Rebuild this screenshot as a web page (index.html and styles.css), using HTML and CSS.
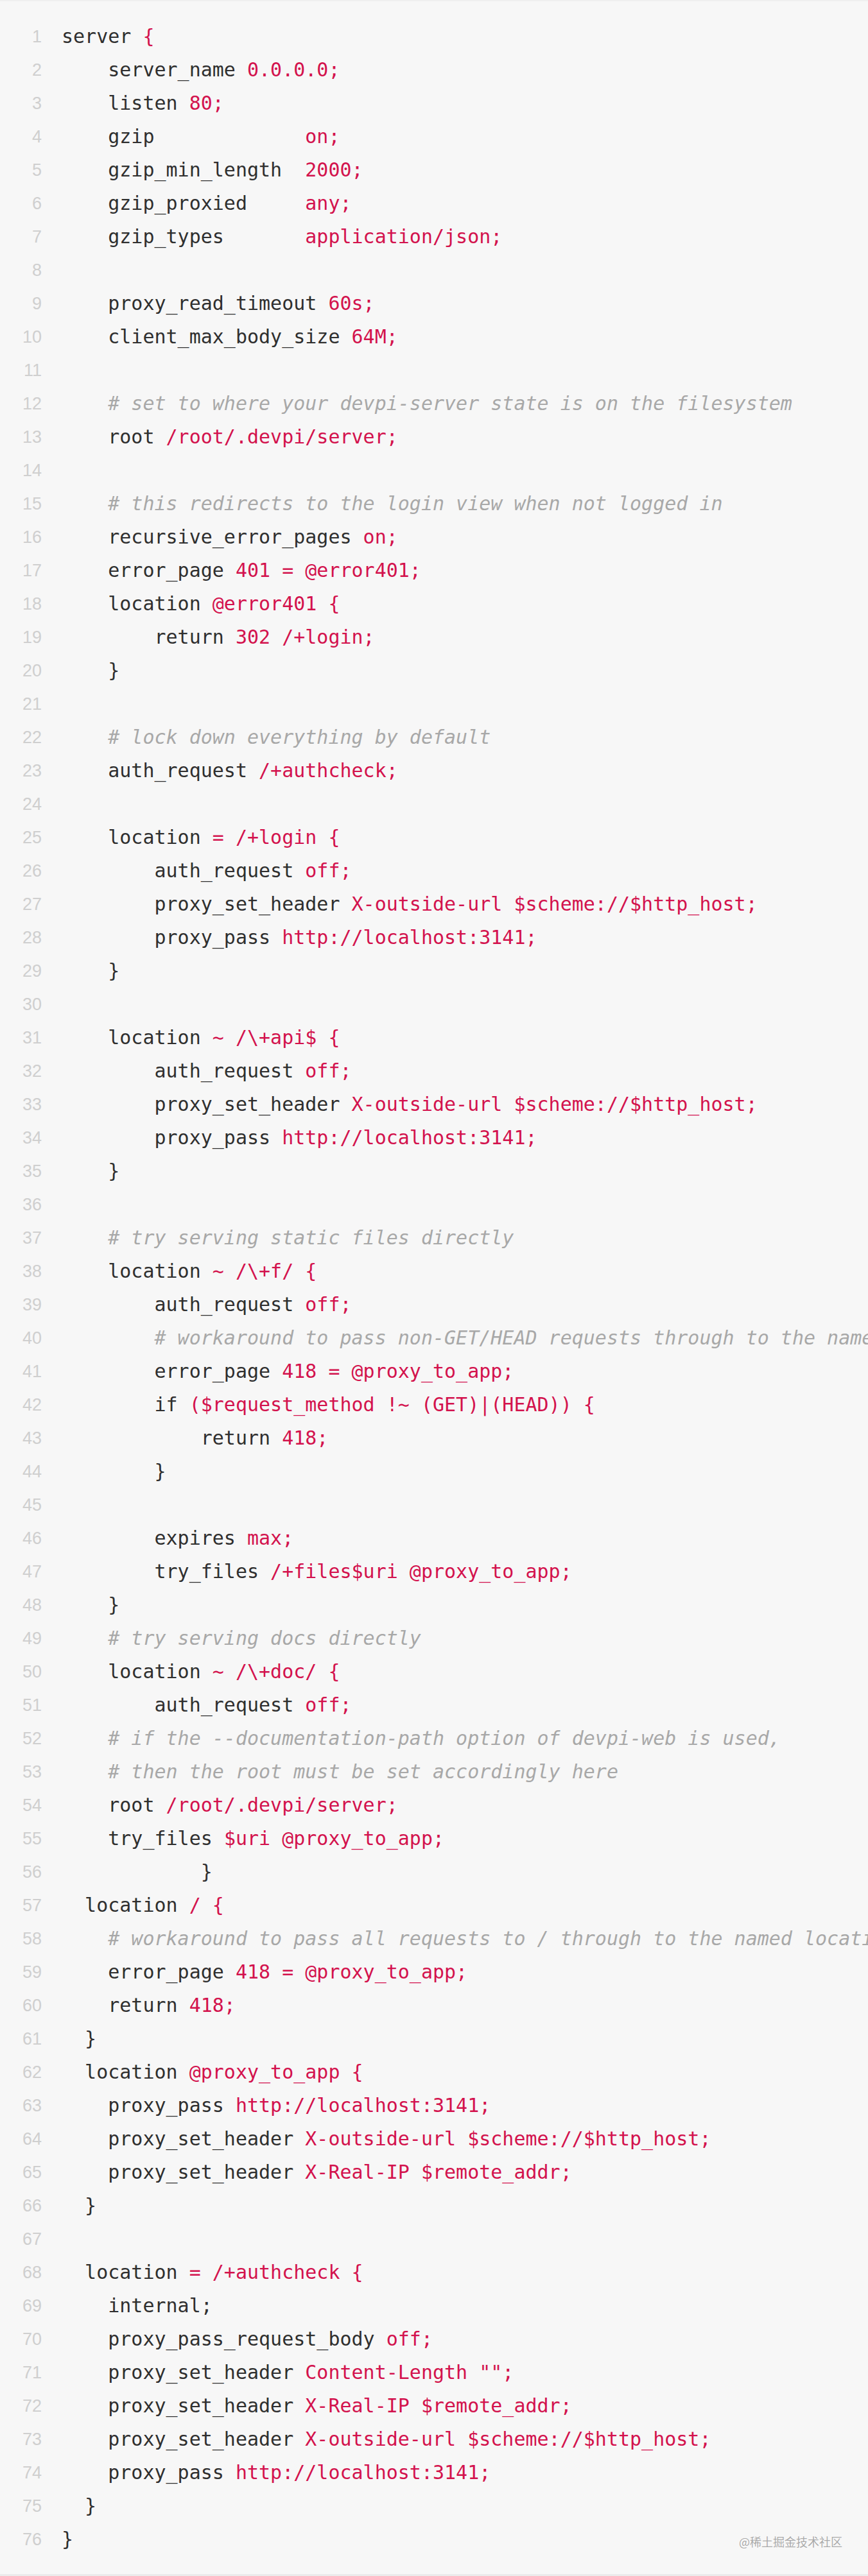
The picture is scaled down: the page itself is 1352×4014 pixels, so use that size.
FILE: index.html
```html
<!DOCTYPE html>
<html lang="en">
<head>
<meta charset="utf-8">
<title>nginx config</title>
<link rel="stylesheet" href="styles.css">
</head>
<body>
<div class="code">
<div class="line"><span class="ln">1</span><span class="src">server <span class="v">{</span></span></div>
<div class="line"><span class="ln">2</span><span class="src">    server_name <span class="v">0.0.0.0;</span></span></div>
<div class="line"><span class="ln">3</span><span class="src">    listen <span class="v">80;</span></span></div>
<div class="line"><span class="ln">4</span><span class="src">    gzip             <span class="v">on;</span></span></div>
<div class="line"><span class="ln">5</span><span class="src">    gzip_min_length  <span class="v">2000;</span></span></div>
<div class="line"><span class="ln">6</span><span class="src">    gzip_proxied     <span class="v">any;</span></span></div>
<div class="line"><span class="ln">7</span><span class="src">    gzip_types       <span class="v">application/json;</span></span></div>
<div class="line"><span class="ln">8</span><span class="src"></span></div>
<div class="line"><span class="ln">9</span><span class="src">    proxy_read_timeout <span class="v">60s;</span></span></div>
<div class="line"><span class="ln">10</span><span class="src">    client_max_body_size <span class="v">64M;</span></span></div>
<div class="line"><span class="ln">11</span><span class="src"></span></div>
<div class="line"><span class="ln">12</span><span class="src">    <span class="c"># set to where your devpi-server state is on the filesystem</span></span></div>
<div class="line"><span class="ln">13</span><span class="src">    root <span class="v">/root/.devpi/server;</span></span></div>
<div class="line"><span class="ln">14</span><span class="src"></span></div>
<div class="line"><span class="ln">15</span><span class="src">    <span class="c"># this redirects to the login view when not logged in</span></span></div>
<div class="line"><span class="ln">16</span><span class="src">    recursive_error_pages <span class="v">on;</span></span></div>
<div class="line"><span class="ln">17</span><span class="src">    error_page <span class="v">401 = @error401;</span></span></div>
<div class="line"><span class="ln">18</span><span class="src">    location <span class="v">@error401 {</span></span></div>
<div class="line"><span class="ln">19</span><span class="src">        return <span class="v">302 /+login;</span></span></div>
<div class="line"><span class="ln">20</span><span class="src">    }</span></div>
<div class="line"><span class="ln">21</span><span class="src"></span></div>
<div class="line"><span class="ln">22</span><span class="src">    <span class="c"># lock down everything by default</span></span></div>
<div class="line"><span class="ln">23</span><span class="src">    auth_request <span class="v">/+authcheck;</span></span></div>
<div class="line"><span class="ln">24</span><span class="src"></span></div>
<div class="line"><span class="ln">25</span><span class="src">    location <span class="v">= /+login {</span></span></div>
<div class="line"><span class="ln">26</span><span class="src">        auth_request <span class="v">off;</span></span></div>
<div class="line"><span class="ln">27</span><span class="src">        proxy_set_header <span class="v">X-outside-url $scheme://$http_host;</span></span></div>
<div class="line"><span class="ln">28</span><span class="src">        proxy_pass <span class="v">http://localhost:3141;</span></span></div>
<div class="line"><span class="ln">29</span><span class="src">    }</span></div>
<div class="line"><span class="ln">30</span><span class="src"></span></div>
<div class="line"><span class="ln">31</span><span class="src">    location <span class="v">~ /\+api$ {</span></span></div>
<div class="line"><span class="ln">32</span><span class="src">        auth_request <span class="v">off;</span></span></div>
<div class="line"><span class="ln">33</span><span class="src">        proxy_set_header <span class="v">X-outside-url $scheme://$http_host;</span></span></div>
<div class="line"><span class="ln">34</span><span class="src">        proxy_pass <span class="v">http://localhost:3141;</span></span></div>
<div class="line"><span class="ln">35</span><span class="src">    }</span></div>
<div class="line"><span class="ln">36</span><span class="src"></span></div>
<div class="line"><span class="ln">37</span><span class="src">    <span class="c"># try serving static files directly</span></span></div>
<div class="line"><span class="ln">38</span><span class="src">    location <span class="v">~ /\+f/ {</span></span></div>
<div class="line"><span class="ln">39</span><span class="src">        auth_request <span class="v">off;</span></span></div>
<div class="line"><span class="ln">40</span><span class="src">        <span class="c"># workaround to pass non-GET/HEAD requests through to the named location below</span></span></div>
<div class="line"><span class="ln">41</span><span class="src">        error_page <span class="v">418 = @proxy_to_app;</span></span></div>
<div class="line"><span class="ln">42</span><span class="src">        if <span class="v">($request_method !~ (GET)|(HEAD)) {</span></span></div>
<div class="line"><span class="ln">43</span><span class="src">            return <span class="v">418;</span></span></div>
<div class="line"><span class="ln">44</span><span class="src">        }</span></div>
<div class="line"><span class="ln">45</span><span class="src"></span></div>
<div class="line"><span class="ln">46</span><span class="src">        expires <span class="v">max;</span></span></div>
<div class="line"><span class="ln">47</span><span class="src">        try_files <span class="v">/+files$uri @proxy_to_app;</span></span></div>
<div class="line"><span class="ln">48</span><span class="src">    }</span></div>
<div class="line"><span class="ln">49</span><span class="src">    <span class="c"># try serving docs directly</span></span></div>
<div class="line"><span class="ln">50</span><span class="src">    location <span class="v">~ /\+doc/ {</span></span></div>
<div class="line"><span class="ln">51</span><span class="src">        auth_request <span class="v">off;</span></span></div>
<div class="line"><span class="ln">52</span><span class="src">    <span class="c"># if the --documentation-path option of devpi-web is used,</span></span></div>
<div class="line"><span class="ln">53</span><span class="src">    <span class="c"># then the root must be set accordingly here</span></span></div>
<div class="line"><span class="ln">54</span><span class="src">    root <span class="v">/root/.devpi/server;</span></span></div>
<div class="line"><span class="ln">55</span><span class="src">    try_files <span class="v">$uri @proxy_to_app;</span></span></div>
<div class="line"><span class="ln">56</span><span class="src">            }</span></div>
<div class="line"><span class="ln">57</span><span class="src">  location <span class="v">/ {</span></span></div>
<div class="line"><span class="ln">58</span><span class="src">    <span class="c"># workaround to pass all requests to / through to the named location below</span></span></div>
<div class="line"><span class="ln">59</span><span class="src">    error_page <span class="v">418 = @proxy_to_app;</span></span></div>
<div class="line"><span class="ln">60</span><span class="src">    return <span class="v">418;</span></span></div>
<div class="line"><span class="ln">61</span><span class="src">  }</span></div>
<div class="line"><span class="ln">62</span><span class="src">  location <span class="v">@proxy_to_app {</span></span></div>
<div class="line"><span class="ln">63</span><span class="src">    proxy_pass <span class="v">http://localhost:3141;</span></span></div>
<div class="line"><span class="ln">64</span><span class="src">    proxy_set_header <span class="v">X-outside-url $scheme://$http_host;</span></span></div>
<div class="line"><span class="ln">65</span><span class="src">    proxy_set_header <span class="v">X-Real-IP $remote_addr;</span></span></div>
<div class="line"><span class="ln">66</span><span class="src">  }</span></div>
<div class="line"><span class="ln">67</span><span class="src"></span></div>
<div class="line"><span class="ln">68</span><span class="src">  location <span class="v">= /+authcheck {</span></span></div>
<div class="line"><span class="ln">69</span><span class="src">    internal;</span></div>
<div class="line"><span class="ln">70</span><span class="src">    proxy_pass_request_body <span class="v">off;</span></span></div>
<div class="line"><span class="ln">71</span><span class="src">    proxy_set_header <span class="v">Content-Length "";</span></span></div>
<div class="line"><span class="ln">72</span><span class="src">    proxy_set_header <span class="v">X-Real-IP $remote_addr;</span></span></div>
<div class="line"><span class="ln">73</span><span class="src">    proxy_set_header <span class="v">X-outside-url $scheme://$http_host;</span></span></div>
<div class="line"><span class="ln">74</span><span class="src">    proxy_pass <span class="v">http://localhost:3141;</span></span></div>
<div class="line"><span class="ln">75</span><span class="src">  }</span></div>
<div class="line"><span class="ln">76</span><span class="src">}</span></div>
<div class="watermark">@稀土掘金技术社区</div>
</div>
</body>
</html>
```
FILE: styles.css
```css
html, body {
  margin: 0;
  padding: 0;
  background: #f7f7f7;
}

.code {
  position: relative;
  box-sizing: border-box;
  width: 1352px;
  height: 4014px;
  overflow: hidden;
  background: #f7f7f7;
  border-top: 2px solid #efefef;
  border-bottom: 3px solid #ebebeb;
  padding: 29px 0 28px 0;
}

.line {
  display: flex;
  height: 52px;
  line-height: 52px;
  white-space: nowrap;
}

.ln {
  flex: none;
  width: 65px;
  margin-right: 31px;
  text-align: right;
  font-family: "Liberation Sans", Arial, sans-serif;
  font-size: 27px;
  color: #cfcfcf;
}

.src {
  flex: none;
  white-space: pre;
  font-family: "DejaVu Sans Mono", monospace;
  font-size: 30px;
  color: #2f2f2f;
}

.v {
  color: #d3124d;
}

.c {
  color: #a8a8a8;
  font-style: italic;
}

.watermark {
  position: absolute;
  right: 40px;
  bottom: 42px;
  font-family: "Noto Sans CJK SC", "Noto Sans", sans-serif;
  font-size: 18px;
  line-height: 18px;
  color: #a9a9a9;
  text-shadow: 0 0 1px #ffffff, 0 0 2px #ffffff;
}
```
